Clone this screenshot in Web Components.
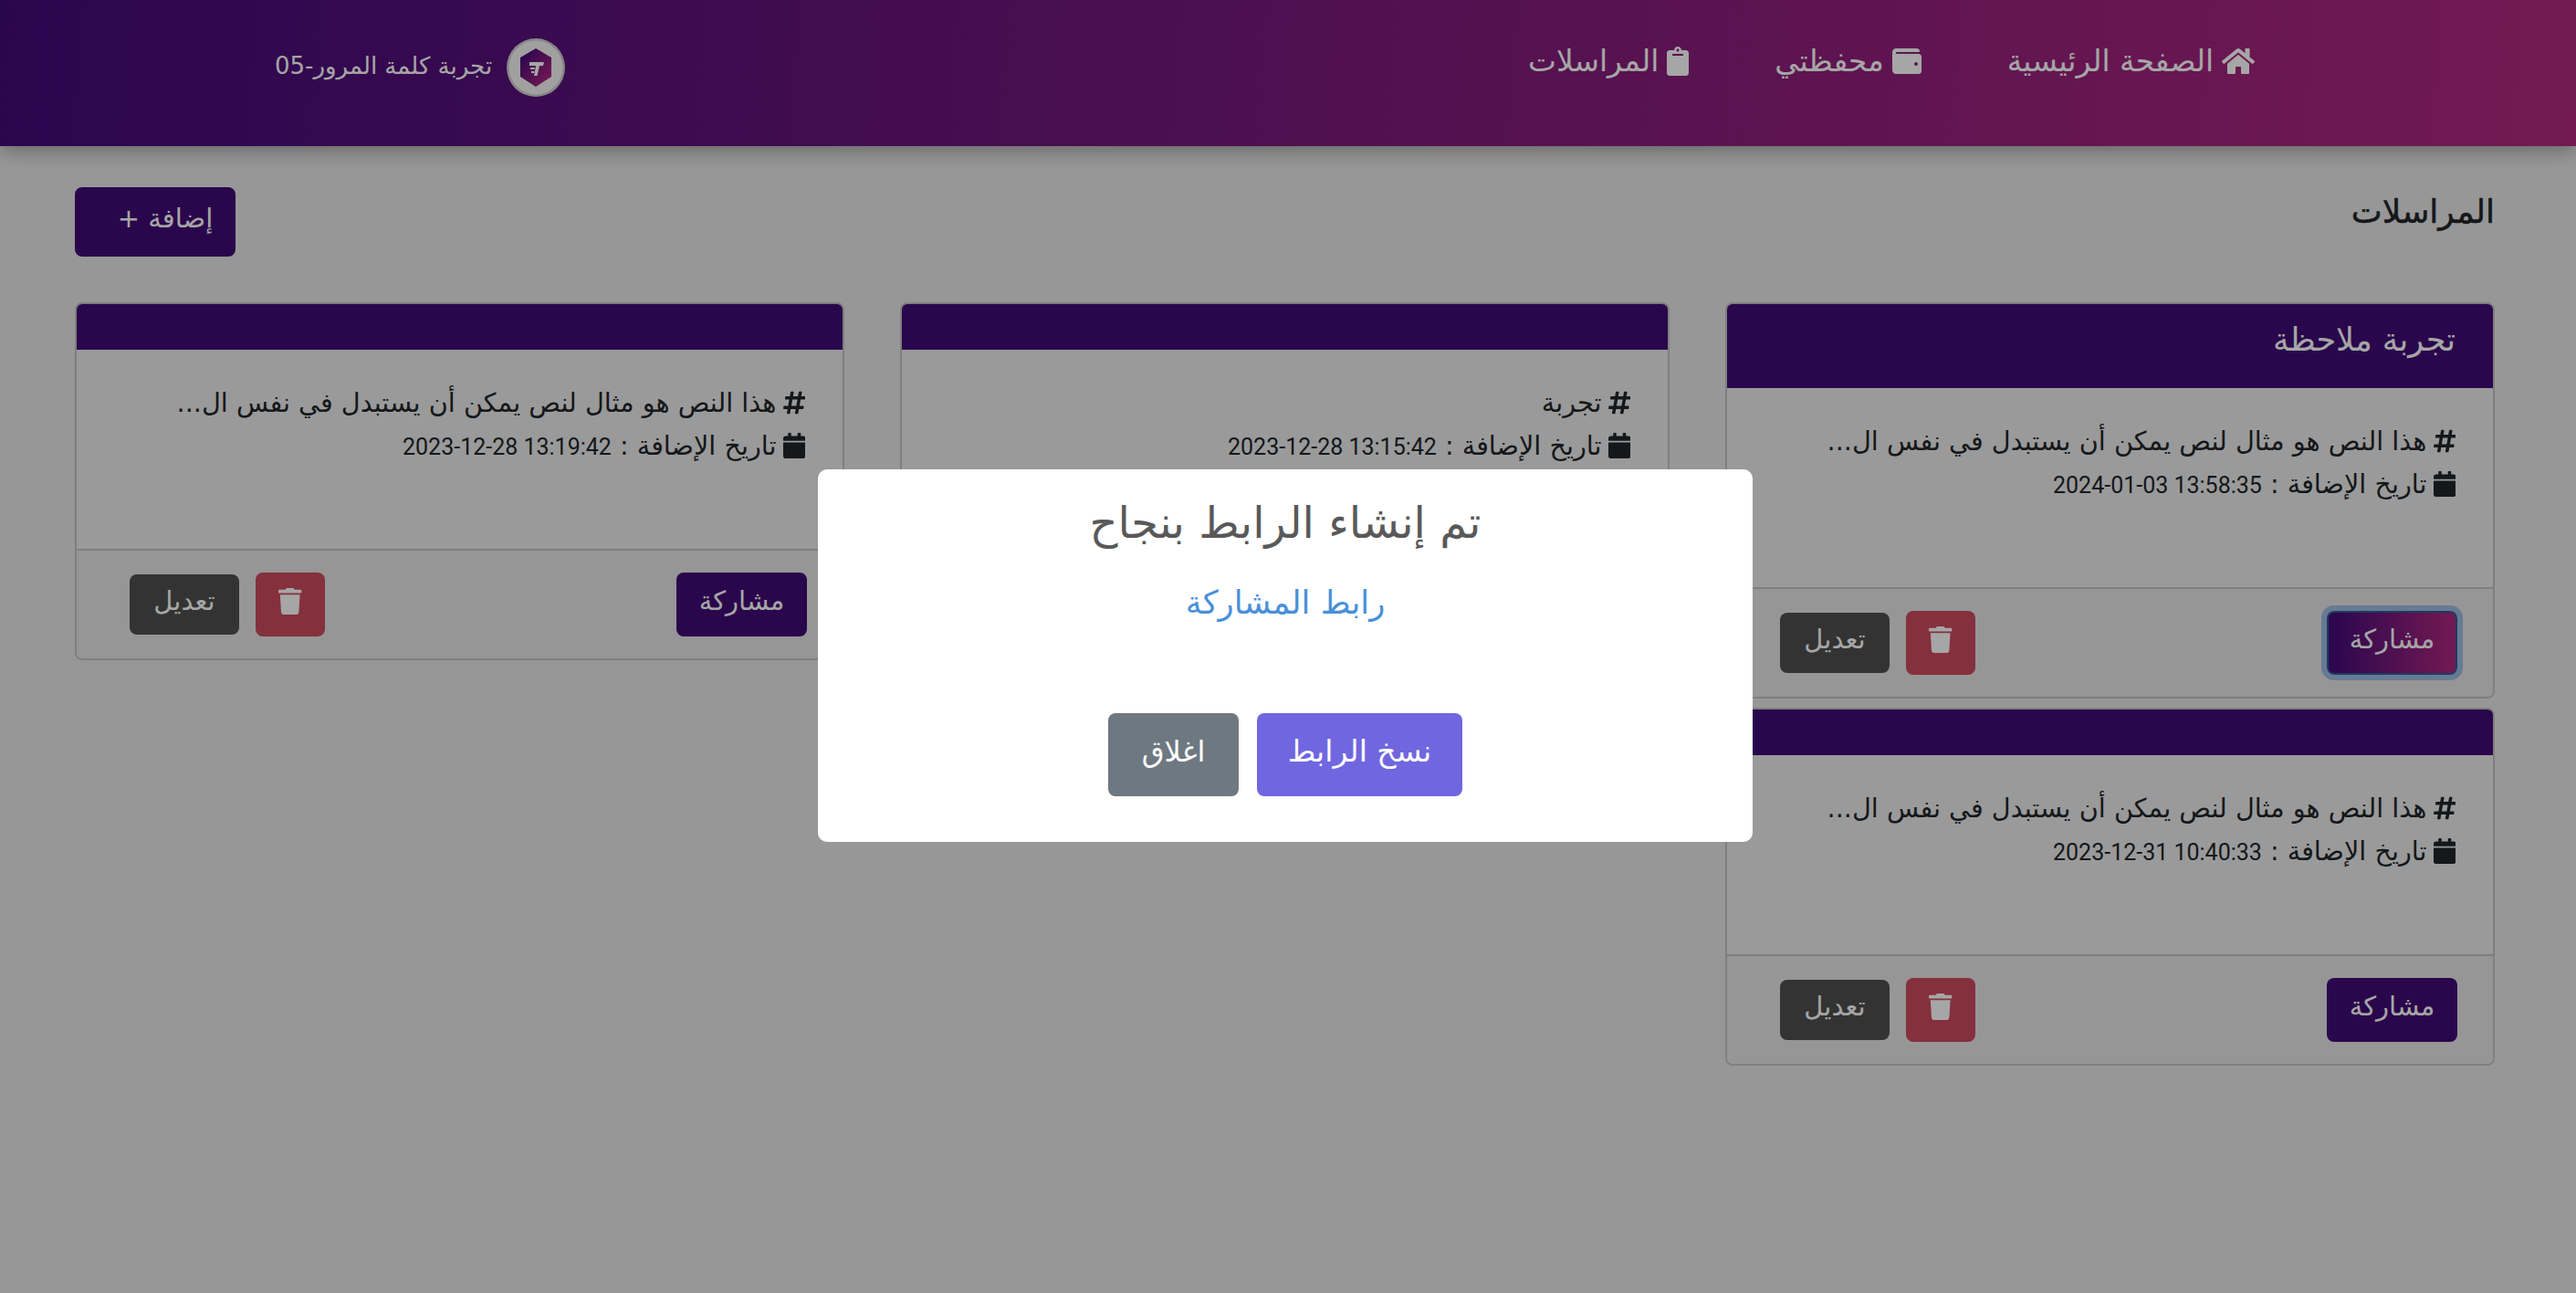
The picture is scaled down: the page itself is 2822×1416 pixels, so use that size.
<!DOCTYPE html>
<html lang="ar" dir="rtl">
<head>
<meta charset="utf-8">
<title>المراسلات</title>
<style>
  html, body { margin: 0; height: 100%; overflow: hidden; }
  body {
    background: #e9e9e9;
    color: #212529;
    font-family: "DejaVu Sans", sans-serif;
  }
</style>
</head>
<body>
<app-header></app-header>
<notes-page>
  <note-column>
    <note-card title-text="تجربة ملاحظة" text="هذا النص هو مثال لنص يمكن أن يستبدل في نفس ال..." date="2024-01-03 13:58:35" focused></note-card>
    <note-card text="هذا النص هو مثال لنص يمكن أن يستبدل في نفس ال..." date="2023-12-31 10:40:33"></note-card>
  </note-column>
  <note-column>
    <note-card text="تجربة" date="2023-12-28 13:15:42"></note-card>
  </note-column>
  <note-column>
    <note-card text="هذا النص هو مثال لنص يمكن أن يستبدل في نفس ال..." date="2023-12-28 13:19:42"></note-card>
  </note-column>
</notes-page>
<share-modal></share-modal>

<script>
const ICONS = {
  home: ["0 0 576 512", "M280.37 148.26L96 300.11V464a16 16 0 0 0 16 16l112.06-.29a16 16 0 0 0 15.92-16V368a16 16 0 0 1 16-16h64a16 16 0 0 1 16 16v95.64a16 16 0 0 0 16 16.05L464 480a16 16 0 0 0 16-16V300L295.67 148.26a12.19 12.19 0 0 0-15.3 0zM571.6 251.47L488 182.56V44.05a12 12 0 0 0-12-12h-56a12 12 0 0 0-12 12v72.61L318.47 43a48 48 0 0 0-61 0L4.34 251.47a12 12 0 0 0-1.6 16.9l25.5 31A12 12 0 0 0 45.15 301l235.22-193.74a12.19 12.19 0 0 1 15.3 0L530.9 301a12 12 0 0 0 16.9-1.6l25.5-31a12 12 0 0 0-1.7-16.93z"],
  wallet: ["0 0 512 512", "M461.2 128H80c-8.84 0-16-7.16-16-16s7.16-16 16-16h384c8.84 0 16-7.16 16-16 0-26.51-21.49-48-48-48H64C28.65 32 0 60.65 0 96v320c0 35.35 28.65 64 64 64h397.2c28.02 0 50.8-21.53 50.8-48V176c0-26.47-22.78-48-50.8-48zM416 336c-17.67 0-32-14.33-32-32s14.33-32 32-32 32 14.33 32 32-14.33 32-32 32z"],
  clipboard: ["0 0 384 512", "M384 112v352c0 26.51-21.49 48-48 48H48c-26.51 0-48-21.49-48-48V112c0-26.51 21.49-48 48-48h80c0-35.29 28.71-64 64-64s64 28.71 64 64h80c26.51 0 48 21.49 48 48zM192 40c-13.255 0-24 10.745-24 24s10.745 24 24 24 24-10.745 24-24-10.745-24-24-24m96 114v-20a6 6 0 0 0-6-6H102a6 6 0 0 0-6 6v20a6 6 0 0 0 6 6h180a6 6 0 0 0 6-6z"],
  calendar: ["0 0 448 512", "M12 192h424c6.6 0 12 5.4 12 12v260c0 26.5-21.5 48-48 48H48c-26.5 0-48-21.5-48-48V204c0-6.6 5.4-12 12-12zm436-44v-36c0-26.5-21.5-48-48-48h-48V12c0-6.6-5.4-12-12-12h-40c-6.6 0-12 5.4-12 12v52H160V12c0-6.6-5.4-12-12-12h-40c-6.6 0-12 5.4-12 12v52H48C21.5 64 0 85.5 0 112v36c0 6.6 5.4 12 12 12h424c6.6 0 12-5.4 12-12z"],
  trash: ["0 0 448 512", "M432 32H312l-9.4-18.7A24 24 0 0 0 281.1 0H166.8a23.72 23.72 0 0 0-21.4 13.3L136 32H16A16 16 0 0 0 0 48v32a16 16 0 0 0 16 16h416a16 16 0 0 0 16-16V48a16 16 0 0 0-16-16zM53.2 467a48 48 0 0 0 47.9 45h245.8a48 48 0 0 0 47.9-45L416 128H32z"],
  hashtag: ["0 0 448 512", "M440.667 182.109l7.143-40c1.313-7.355-4.342-14.109-11.813-14.109h-74.81l14.623-81.891C377.123 38.754 371.468 32 363.997 32h-40.632a12 12 0 0 0-11.813 9.891L296.175 128H197.54l14.623-81.891C213.477 38.754 207.822 32 200.35 32h-40.632a12 12 0 0 0-11.813 9.891L132.528 128H53.432a12 12 0 0 0-11.813 9.891l-7.143 40C33.163 185.246 38.818 192 46.289 192h74.81L98.242 320H19.146a12 12 0 0 0-11.813 9.891l-7.143 40C-1.123 377.246 4.532 384 12.003 384h74.81L72.19 465.891C70.877 473.246 76.532 480 84.003 480h40.632a12 12 0 0 0 11.813-9.891L151.825 384h98.634l-14.623 81.891C234.523 473.246 240.178 480 247.65 480h40.632a12 12 0 0 0 11.813-9.891L315.472 384h79.096a12 12 0 0 0 11.813-9.891l7.143-40c1.313-7.355-4.342-14.109-11.813-14.109h-74.81l22.857-128h79.096a12 12 0 0 0 11.813-9.891zM261.889 320h-98.634l22.857-128h98.634l-22.857 128z"]
};

class FaIcon extends HTMLElement {
  connectedCallback() {
    const [box, d] = ICONS[this.getAttribute("name")];
    const size = this.getAttribute("size") || 26;
    this.attachShadow({ mode: "open" }).innerHTML = `
      <style>
        :host { display: inline-flex; flex: none; }
        svg { height: ${size}px; width: auto; display: block; fill: currentColor; }
      </style>
      <svg viewBox="${box}"><path d="${d}"></path></svg>`;
  }
}

class AppButton extends HTMLElement {
  constructor() {
    super();
    this.attachShadow({ mode: "open" }).innerHTML = `
      <style>
        :host { display: inline-flex; }
        button {
          font: inherit; color: #fff; border: 0; border-radius: 8px; padding: 0 var(--pr, 0) 8px var(--pl, 0);
          display: flex; align-items: center; justify-content: center; box-sizing: border-box;
          width: var(--w, 143px); height: var(--h, 70px); font-size: var(--fs, 29px);
          background: var(--bg, #410b75);
        }
        :host([focused]) button {
          background: linear-gradient(90deg, #410a7a, #b1287e);
          border: 2px solid #2e5a94; box-shadow: 0 0 0 6px #9dbce4;
        }
      </style>
      <button type="button"><slot></slot></button>`;
  }
}

class NavLink extends HTMLElement {
  constructor() {
    super();
    this.attachShadow({ mode: "open" }).innerHTML = `
      <style>
        :host { display: inline-flex; align-items: center; gap: 9px; color: #fff; font-size: 32.8px; height: 34px; }
      </style>
      <fa-icon name="${this.getAttribute("icon")}" size="${this.getAttribute("size") || 32}"></fa-icon>
      <slot></slot>`;
  }
}

class AppHeader extends HTMLElement {
  constructor() {
    super();
    this.attachShadow({ mode: "open" }).innerHTML = `
      <style>
        :host {
          display: flex; box-sizing: border-box; height: 160px; padding: 50px 352px 0 301px;
          justify-content: space-between; align-items: flex-start; position: relative;
          background: linear-gradient(95deg, #410a7a, #b1287e);
          box-shadow: 0 4px 22px rgba(0,0,0,.35);
        }
        nav { display: flex; gap: 94px; }
        .user { display: flex; align-items: center; gap: 16px; color: #fff; font-size: 26px; margin-top: -8px; }
        .user span { margin-top: -5px; }
        .logo { width: 64px; height: 64px; flex: none; display: block; }
      </style>
      <nav>
        <nav-link icon="home">الصفحة الرئيسية</nav-link>
        <nav-link icon="wallet">محفظتي</nav-link>
        <nav-link icon="clipboard">المراسلات</nav-link>
      </nav>
      <div class="user">
        <svg class="logo" viewBox="0 0 64 64">
          <defs><linearGradient id="lg" x1="0" y1="0" x2="1" y2="1"><stop offset="0.1" stop-color="#410a7a"/><stop offset="0.9" stop-color="#b1287e"/></linearGradient></defs>
          <circle cx="32" cy="32" r="32" fill="#cfcfcf"/>
          <circle cx="32" cy="32" r="29.5" fill="#f6f6f6"/>
          <path d="M32 11 L49 21 V42 L32 53 L15 42 V21 Z" fill="url(#lg)"/>
          <path d="M25 26 H41 L40 30 H36 L33.5 41 H30 L32 30 H25 Z M26 32 H31 L30.5 34 H26 Z M27 36 H30.5 L30 38 H27 Z" fill="#fff"/>
        </svg>
        <span>تجربة كلمة المرور-05</span>
      </div>`;
  }
}

class NotesPage extends HTMLElement {
  constructor() {
    super();
    this.attachShadow({ mode: "open" }).innerHTML = `
      <style>
        :host { display: block; padding: 45px 89px 0 82px; }
        .top { display: flex; justify-content: space-between; align-items: flex-start; height: 76px; margin-bottom: 50px; }
        h1 { margin: 0; font-size: 36px; font-weight: 500; line-height: 54px; -webkit-text-stroke: .5px currentColor; }
        .grid { display: grid; grid-template-columns: repeat(3, 843px); justify-content: space-between; align-items: start; }
        app-button { --w: 176px; --h: 76px; --fs: 29px; --pl: 22px; }
      </style>
      <div class="top">
        <h1>المراسلات</h1>
        <app-button>إضافة +</app-button>
      </div>
      <div class="grid"><slot></slot></div>`;
  }
}

class NoteColumn extends HTMLElement {
  constructor() {
    super();
    this.attachShadow({ mode: "open" }).innerHTML = `
      <style>:host { display: flex; flex-direction: column; gap: 10px; }</style><slot></slot>`;
  }
}

class NoteCard extends HTMLElement {
  connectedCallback() {
    const title = this.getAttribute("title-text") || "";
    const focused = this.hasAttribute("focused") ? "focused" : "";
    this.attachShadow({ mode: "open" }).innerHTML = `
      <style>
        :host { display: block; border: 2px solid #c3c3c3; border-radius: 8px; overflow: hidden; background: #ededed; }
        header { background: #410b75; color: #fff; font-size: 35px; height: 50px; box-sizing: border-box; }
        header.titled { height: 92px; padding: 15px 41px 0; line-height: 48px; }
        .body { box-sizing: border-box; height: 218px; padding: 34px 41px 0; font-size: 28.7px; color: #212529; }
        .line { display: flex; align-items: center; gap: 7px; height: 47px; }
        .num { font-family: "Roboto", sans-serif; font-size: 25px; }
        footer {
          box-sizing: border-box; height: 120px; border-top: 2px solid #c3c3c3; background: #e7e7e7;
          display: flex; align-items: center; justify-content: space-between; padding: 0 39px 0 58px;
        }
        .actions { display: flex; align-items: center; gap: 18px; }
        .del { --w: 76px; --bg: #cd4a5f; }
        .edit { --w: 120px; --h: 66px; --bg: #4f4f4f; }
      </style>
      <header class="${title ? "titled" : ""}">${title}</header>
      <div class="body">
        <div class="line"><fa-icon name="hashtag" size="28"></fa-icon><span>${this.getAttribute("text")}</span></div>
        <div class="line"><fa-icon name="calendar" size="28"></fa-icon><span>تاريخ الإضافة : <span class="num" dir="ltr">${this.getAttribute("date")}</span></span></div>
      </div>
      <footer>
        <app-button ${focused}>مشاركة</app-button>
        <div class="actions">
          <app-button class="del"><fa-icon name="trash" size="29"></fa-icon></app-button>
          <app-button class="edit">تعديل</app-button>
        </div>
      </footer>`;
  }
}

class ShareModal extends HTMLElement {
  constructor() {
    super();
    this.attachShadow({ mode: "open" }).innerHTML = `
      <style>
        :host {
          position: fixed; inset: 0; background: rgba(0,0,0,.35); z-index: 10;
          display: flex; align-items: center; justify-content: center; padding: 20px 6px 0 0; box-sizing: border-box;
        }
        .box {
          width: 1024px; height: 408px; box-sizing: border-box; background: #fff; border-radius: 10px;
          display: flex; flex-direction: column; align-items: center; padding-top: 28px;
        }
        h2 { margin: 0; color: #595959; font-size: 48px; font-weight: 500; line-height: 60px; }
        a { color: #4a90d9; font-size: 35.5px; line-height: 44px; margin-top: 36px; text-decoration: none; }
        .actions { display: flex; gap: 20px; margin-top: 99px; }
        .copy { --w: 225px; --h: 91px; --fs: 33px; --bg: #7066e0; }
        .close { --w: 143px; --h: 91px; --fs: 32px; --bg: #6e7881; }
      </style>
      <div class="box">
        <h2>تم إنشاء الرابط بنجاح</h2>
        <a href="#">رابط المشاركة</a>
        <div class="actions">
          <app-button class="copy">نسخ الرابط</app-button>
          <app-button class="close">اغلاق</app-button>
        </div>
      </div>`;
  }
}

customElements.define("fa-icon", FaIcon);
customElements.define("app-button", AppButton);
customElements.define("nav-link", NavLink);
customElements.define("app-header", AppHeader);
customElements.define("notes-page", NotesPage);
customElements.define("note-column", NoteColumn);
customElements.define("note-card", NoteCard);
customElements.define("share-modal", ShareModal);
</script>
</body>
</html>
